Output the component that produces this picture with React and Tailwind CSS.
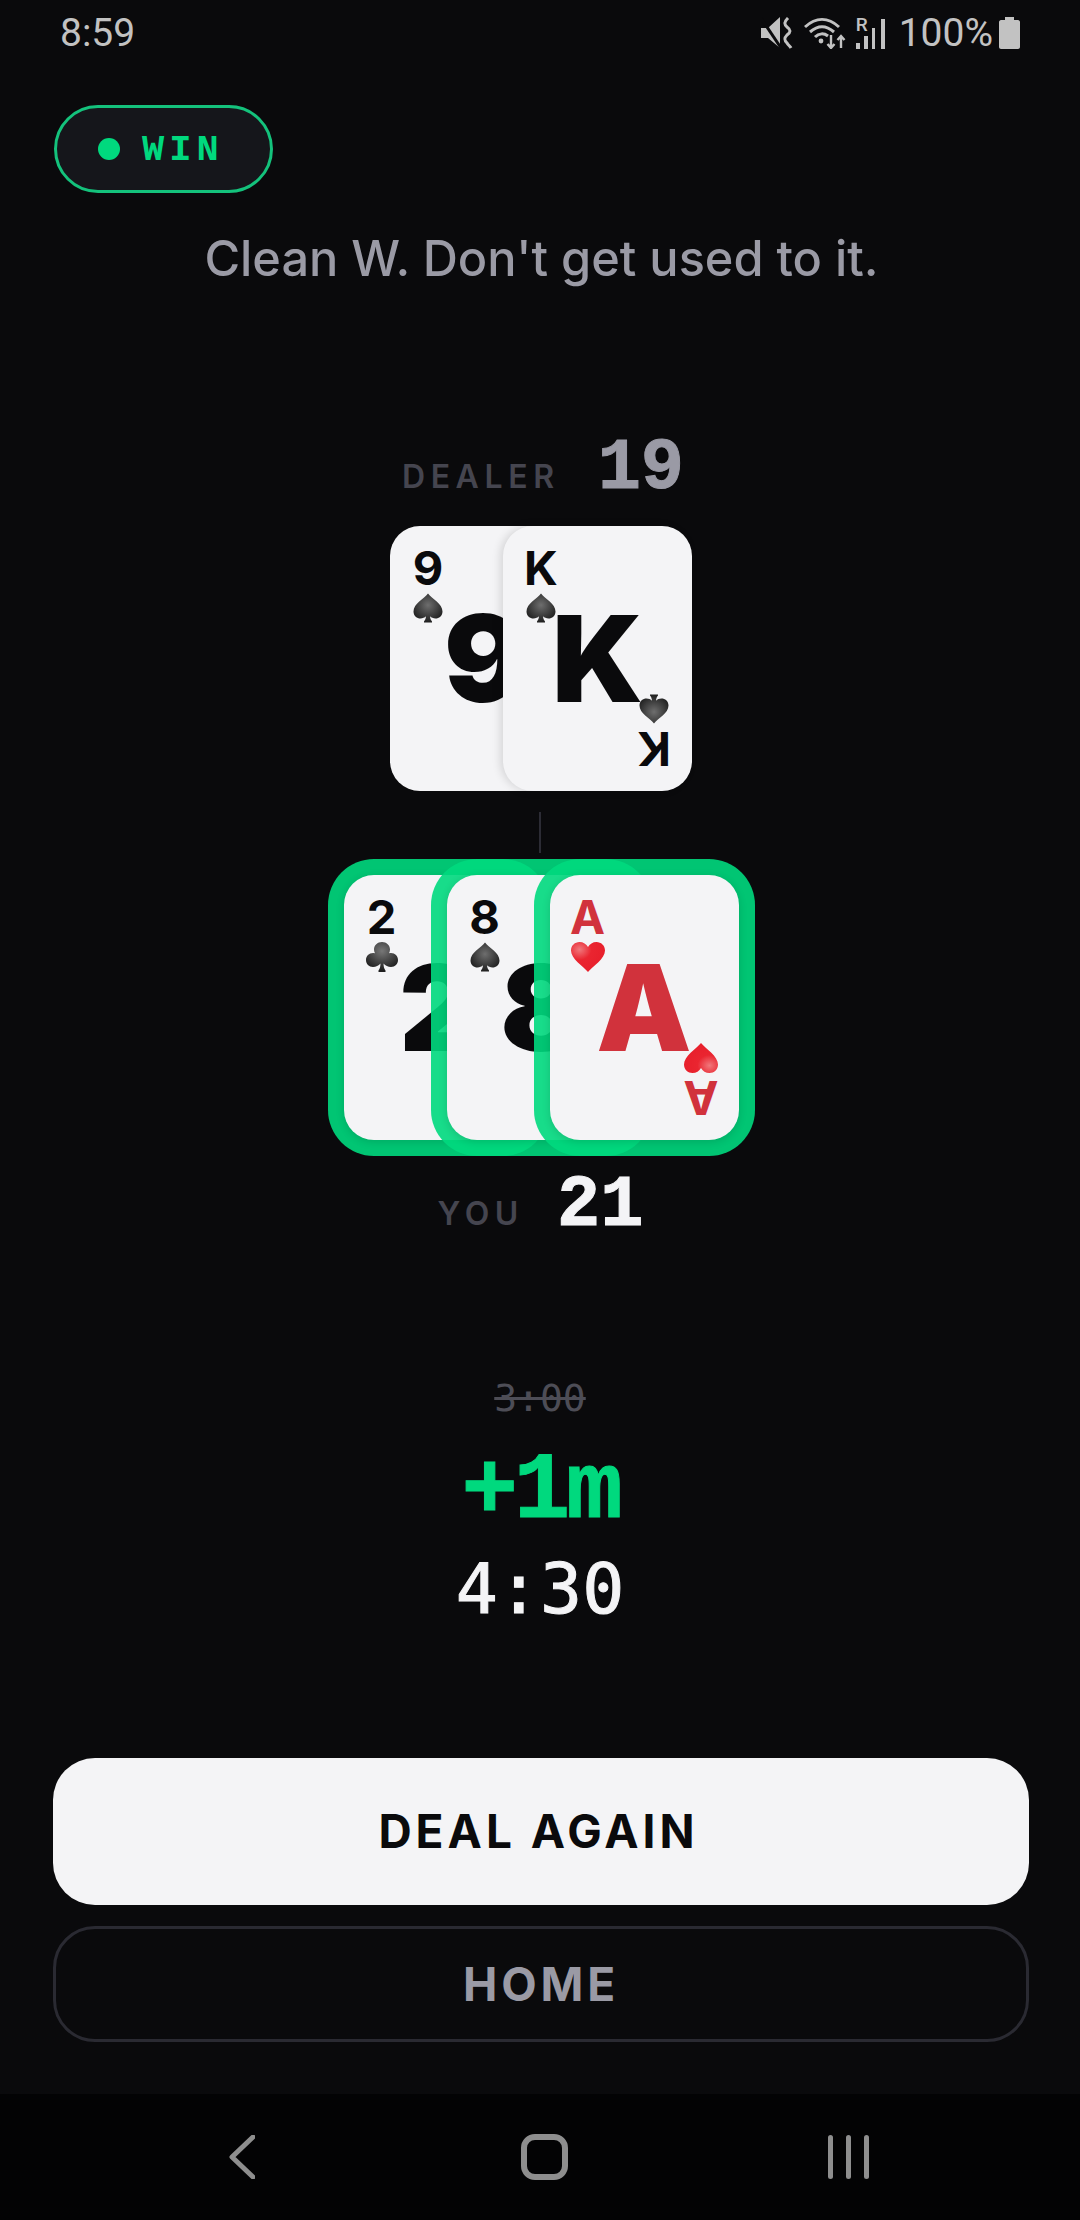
import React from "react";

const Spade = ({ id, className = "" }) => (
  <svg viewBox="0 0 30 30" className={`block w-[30px] h-[30px] ${className}`}>
    <defs>
      <radialGradient id={id} cx="0.5" cy="0.4" r="0.6">
        <stop offset="0" stopColor="#6e6e6e" />
        <stop offset="1" stopColor="#1f1f1f" />
      </radialGradient>
    </defs>
    <path d="M15 0.5C19 6 29.5 10.5 29.5 18.5C29.5 23 26 25.5 22.5 25.5C20.2 25.5 18.4 24.6 17 23.3C17.2 25.6 17.8 27 19 28.5L19 29.5L11 29.5L11 28.5C12.2 27 12.8 25.6 13 23.3C11.6 24.6 9.8 25.5 7.5 25.5C4 25.5 0.5 23 0.5 18.5C0.5 10.5 11 6 15 0.5Z" fill={`url(#${id})`} />
  </svg>
);

const Club = ({ id }) => (
  <svg viewBox="0 0 32 30" className="block w-[32px] h-[30px]">
    <defs>
      <radialGradient id={id} cx="0.5" cy="0.3" r="0.65">
        <stop offset="0" stopColor="#777" />
        <stop offset="1" stopColor="#1f1f1f" />
      </radialGradient>
    </defs>
    <path d="M16 0C20.5 0 24 3.2 24 7.5C24 9 23.6 10.2 23 11.3C23.8 11.1 24.4 11 25 11C29 11 32 14 32 18C32 22 29 25 25 25C22 25 19.5 23.5 17.5 21.5C17.6 24.5 18 26.5 19.5 28.5L19.5 30L12.5 30L12.5 28.5C14 26.5 14.4 24.5 14.5 21.5C12.5 23.5 10 25 7 25C3 25 0 22 0 18C0 14 3 11 7 11C7.6 11 8.2 11.1 9 11.3C8.4 10.2 8 9 8 7.5C8 3.2 11.5 0 16 0Z" fill={`url(#${id})`} />
  </svg>
);

const Heart = ({ id, className = "" }) => (
  <svg viewBox="0 0 34 30" className={`block w-[34px] h-[30px] ${className}`}>
    <defs>
      <radialGradient id={id} cx="0.25" cy="0.25" r="0.7">
        <stop offset="0" stopColor="#f0787c" />
        <stop offset="0.5" stopColor="#ea2530" />
        <stop offset="1" stopColor="#e8202c" />
      </radialGradient>
    </defs>
    <path d="M17 30C12 24 0 17 0 8.5C0 3.5 4 0 8.5 0C12.2 0 15.4 2 17 5C18.6 2 21.8 0 25.5 0C30 0 34 3.5 34 8.5C34 17 22 24 17 30Z" fill={`url(#${id})`} />
  </svg>
);

const PlayingCard = ({ rank, suit: Suit, sid, red = false, ring = false, first = false, step = "" }) => {
  const color = red ? "text-[#d1323c]" : "text-[#0a0a0c]";
  return (
    <div
      className={`relative w-[189px] h-[265px] rounded-[30px] bg-[#f4f4f6] shrink-0 ${step} ${color} ${
        ring
          ? "shadow-[0_2px_8px_rgba(0,0,0,0.14),0_0_0_16px_rgba(0,217,126,0.9)]"
          : first
          ? ""
          : "shadow-[-3px_0_8px_rgba(0,0,0,0.12)]"
      } font-['Inter',sans-serif]`}
    >
      <div className="absolute left-[23px] top-[24px] flex flex-col items-center w-[30px]">
        <span className="block text-[47px] leading-[35px] font-bold">{rank}</span>
        <div className="mt-[8px]"><Suit id={`${sid}a`} /></div>
      </div>
      <div className="h-full flex items-center justify-center text-[120px] leading-none font-black">{rank}</div>
      <div className="absolute right-[23px] bottom-[24px] flex flex-col items-center w-[30px] rotate-180">
        <span className="block text-[47px] leading-[35px] font-bold">{rank}</span>
        <div className="mt-[8px]"><Suit id={`${sid}b`} /></div>
      </div>
    </div>
  );
};

export default function App() {
  return (
    <div className="w-[1080px] h-[2220px] bg-[#0a0a0c] flex flex-col overflow-hidden font-['Inter',sans-serif]">
      {/* Status bar */}
      <div className="h-[66px] flex items-center justify-between pl-[60px] pr-[60px] text-[#c2c2c2] font-['Roboto',sans-serif] text-[39px] leading-none">
        <span>8:59</span>
        <div className="flex items-center">
          <svg viewBox="0 0 32 32" className="w-[32px] h-[32px]">
            <path d="M0 11H7L19 0V31L7 21H0Z" fill="#c2c2c2" />
            <path d="M0 1L20 31" stroke="#0a0a0c" strokeWidth="3" fill="none" />
            <path d="M27 1C23 5 23 7 26 10C30 13 30 15 26 18C23 21 23 23 26 26C27 28 29 29 30 31" stroke="#c2c2c2" strokeWidth="3" fill="none" />
          </svg>
          <svg viewBox="0 0 42 32" className="w-[42px] h-[32px] ml-[11px]" fill="none" stroke="#c2c2c2" strokeWidth="3">
            <path d="M1 10C12 0 24 0 35 10" />
            <path d="M6 15C14 8 22 8 30 15" />
            <path d="M11 20C15 16 20 16 24 19" />
            <circle cx="17" cy="24" r="2.4" fill="#c2c2c2" stroke="none" />
            <path d="M27 18V31M23.5 27L27 31L30.5 27" strokeWidth="2.4" />
            <path d="M37 31V19M33.5 23L37 19L40.5 23" strokeWidth="2.4" />
          </svg>
          <div className="relative w-[29px] h-[32px] ml-[10px]">
            <span className="absolute left-0 -top-[2px] text-[19px] leading-[19px] font-medium font-['Roboto',sans-serif]">R</span>
            <div className="absolute left-0 bottom-0 flex items-end gap-[4px]">
              <div className="w-[4px] h-[6px] bg-[#c2c2c2]" />
              <div className="w-[4px] h-[13px] bg-[#c2c2c2]" />
              <div className="w-[3px] h-[21px] bg-[#c2c2c2]" />
              <div className="w-[4px] h-[30px] bg-[#c2c2c2] ml-[2px]" />
            </div>
          </div>
          <span className="ml-[14px]">100%</span>
          <svg viewBox="0 0 21 32" className="w-[21px] h-[32px] ml-[6px] fill-[#c2c2c2]">
            <path d="M6 0H15V3H19C20 3 21 4 21 5V30C21 31 20 32 19 32H2C1 32 0 31 0 30V5C0 4 1 3 2 3H6Z" />
          </svg>
        </div>
      </div>

      {/* Result pill */}
      <div className="pl-[54px] mt-[39px]">
        <div className="w-[219px] h-[88px] rounded-full border-[3px] border-[#14c27c] bg-[#15161b] flex items-center pl-[41px]">
          <span className="w-[22px] h-[22px] rounded-full bg-[#00d97e]" />
          <span className="ml-[22px] mt-[2px] font-['Liberation_Mono',monospace] font-bold text-[37px] leading-none tracking-[5px] text-[#00d97e]">WIN</span>
        </div>
      </div>

      <p className="mt-[37px] pl-[3px] text-center text-[48.7px] leading-[58px] font-medium text-[#9a9aa5]">Clean W. Don't get used to it.</p>

      {/* Dealer */}
      <div className="mt-[153px] flex items-baseline justify-center gap-[38px] pl-[6px] h-[60px]">
        <span className="text-[32px] leading-[30px] font-semibold tracking-[5.6px] text-[#45454f]">DEALER</span>
        <span className="font-['Liberation_Mono',monospace] font-bold text-[72px] leading-[56px] [-webkit-text-stroke:1px_#9a9aa5] text-[#9a9aa5]">19</span>
      </div>
      <div className="mt-[25px] flex justify-center pl-[2px]">
        <PlayingCard rank="9" suit={Spade} sid="d1" first />
        <PlayingCard rank="K" suit={Spade} sid="d2" step="-ml-[76px]" />
      </div>

      <div className="mt-[21px] w-[2px] h-[41px] bg-[#2c2c35] self-center" />

      {/* Player */}
      <div className="mt-[22px] flex justify-center pl-[2px]">
        <PlayingCard rank="2" suit={Club} sid="p1" ring first />
        <PlayingCard rank="8" suit={Spade} sid="p2" ring step="-ml-[86px]" />
        <PlayingCard rank="A" suit={Heart} sid="p3" ring red step="-ml-[86px]" />
      </div>
      <div className="mt-[38px] flex items-baseline justify-center gap-[33px] pl-[1px] h-[56px]">
        <span className="text-[32px] leading-[30px] font-semibold tracking-[5.6px] text-[#45454f]">YOU</span>
        <span className="font-['Liberation_Mono',monospace] font-bold text-[72px] leading-[56px] [-webkit-text-stroke:1px_#f4f4f6] text-[#f4f4f6]">21</span>
      </div>

      {/* Time */}
      <div className="mt-[142px] flex flex-col items-center">
        <span className="font-['DejaVu_Sans_Mono',monospace] text-[38px] leading-[44px] line-through text-[#4d4d56]">3:00</span>
        <span className="mt-[24px] font-['Liberation_Mono',monospace] font-bold text-[94px] leading-[96px] tracking-[-4px] [-webkit-text-stroke:1px_#00d97e] text-[#00d97e]">+1m</span>
        <span className="mt-[9px] font-['DejaVu_Sans_Mono',monospace] text-[70px] leading-[80px] [-webkit-text-stroke:1px_#f4f4f6] text-[#f4f4f6]">4:30</span>
      </div>

      <div className="flex-1" />

      {/* Buttons */}
      <div className="pl-[53px] pr-[51px] flex flex-col gap-[21px]">
        <button className="h-[147px] pr-[5px] rounded-[42px] bg-[#f4f4f6] text-[#0a0a0c] text-[46px] font-bold tracking-[4px]">DEAL AGAIN</button>
        <button className="h-[116px] rounded-[42px] border-[3px] border-[#2a2a32] text-[#9a9aa5] text-[46px] font-bold tracking-[3.8px]">HOME</button>
      </div>

      {/* Nav */}
      <div className="mt-[52px] h-[126px] bg-[#030304] flex items-center pl-[229px]">
        <svg viewBox="0 0 26 44" className="w-[26px] h-[44px]" fill="none" stroke="#8e8e8e" strokeWidth="5" strokeLinecap="round" strokeLinejoin="round">
          <path d="M24 2L3 22L24 42" />
        </svg>
        <div className="ml-[266px] w-[47px] h-[46px] rounded-[14px] border-[6px] border-[#8e8e8e]" />
        <div className="ml-[260px] flex gap-[13px]">
          <div className="w-[5px] h-[44px] rounded-full bg-[#8e8e8e]" />
          <div className="w-[5px] h-[44px] rounded-full bg-[#8e8e8e]" />
          <div className="w-[5px] h-[44px] rounded-full bg-[#8e8e8e]" />
        </div>
      </div>
    </div>
  );
}
